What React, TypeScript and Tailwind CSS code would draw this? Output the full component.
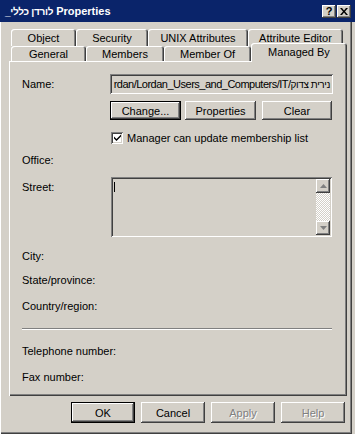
import React from "react";

const raised = "shadow-[inset_-1px_-1px_0_#404040,inset_1px_1px_0_#ffffff,inset_-2px_-2px_0_#808080]";
const sunken = "shadow-[inset_1px_1px_0_#808080,inset_-1px_-1px_0_#ffffff,inset_2px_2px_0_#404040,inset_-2px_-2px_0_#d4d0c8]";
const tabEdge = "shadow-[inset_1px_1px_0_#ffffff,inset_-1px_0_0_#404040,inset_-2px_0_0_#808080]";

function Tab({ label, w, front, selected }: { label: string; w: string; front?: boolean; selected?: boolean }) {
  if (selected) {
    return (
      <div className={`relative -top-[3px] z-10 h-[19px] ${w} bg-[#d4d0c8] rounded-t-[3px] pt-[2px] text-center shadow-[inset_1px_1px_0_#ffffff,inset_-1px_0_0_#404040,inset_-2px_0_0_#808080]`}>
        {label}
      </div>
    );
  }
  return (
    <div className={`h-full ${w} bg-[#d4d0c8] rounded-t-[3px] text-center ${front ? "pt-[1px]" : "pt-[2px]"} ${tabEdge}`}>
      {label}
    </div>
  );
}

function Btn({ label, w, def, disabled }: { label: string; w: string; def?: boolean; disabled?: boolean }) {
  return (
    <div className={`${w} h-full flex items-center justify-center ${def ? "border border-black" : ""} ${raised} ${disabled ? "text-[#808080] [text-shadow:1px_1px_0_#ffffff]" : "text-black"}`}>
      {label}
    </div>
  );
}

function Label({ text, mt }: { text: string; mt: string }) {
  return <div className={`${mt} h-[14px] leading-[14px]`}>{text}</div>;
}

export default function App() {
  return (
    <div className="w-[359px] h-[437px] bg-white font-['Liberation_Sans_Narrow','Liberation_Sans',Arial,sans-serif] text-[11px] leading-[14px] text-black">
      <div className="w-[355px] h-[434px] bg-[#d4d0c8] flex flex-col">
        {/* title bar */}
        <div className="h-[22px] bg-[#0a246a] flex items-center pl-[5px] pr-[4px] shrink-0">
          <div className="flex-1 text-white font-bold text-[11px] pt-[1px] whitespace-nowrap">
            <span className="text-[10px] tracking-[-0.3px]">_לורדן כללי</span> Properties
          </div>
          <div className={`w-[14px] h-[13px] bg-[#d4d0c8] ${raised} flex items-center justify-center font-bold text-[11px] leading-none`}>?</div>
          <div className={`w-[14px] h-[13px] ml-[1px] bg-[#d4d0c8] ${raised} flex items-center justify-center`}>
            <svg width="8" height="7" viewBox="0 0 8 7">
              <path d="M0 0h2l2 2.5L6 0h2L5 3.5 8 7H6L4 4.5 2 7H0l3-3.5z" fill="#000" />
            </svg>
          </div>
        </div>

        {/* body */}
        <div className="flex-1 w-[352px] pt-[7px] shadow-[inset_1px_0_0_#ffffff,inset_-1px_-1px_0_#404040,inset_-2px_-2px_0_#808080]">
          {/* back row of tabs */}
          <div className="ml-[11px] h-[17px] flex">
            <Tab label="Object" w="w-[65px]" />
            <Tab label="Security" w="w-[72px]" />
            <Tab label="UNIX Attributes" w="w-[100px]" />
            <Tab label="Attribute Editor" w="w-[95px]" />
          </div>
          {/* front row of tabs */}
          <div className="ml-[11px] h-[15px] flex">
            <Tab label="General" w="w-[75px]" front />
            <Tab label="Members" w="w-[78px]" front />
            <Tab label="Member Of" w="w-[87px]" front />
            <Tab label="Managed By" w="w-[96px]" selected />
          </div>

          {/* panel */}
          <div className="ml-[9px] w-[338px] h-[335px] pl-[13px] pt-[13px] shadow-[inset_1px_1px_0_#ffffff,inset_-1px_-1px_0_#404040,inset_-2px_-2px_0_#808080]">
            <div className="flex items-center h-[20px]">
              <div className="w-[88px]">Name:</div>
              <div className={`w-[223px] h-full ${sunken} flex items-center justify-end pl-[3px] pr-[3px] overflow-hidden whitespace-nowrap`}>
                <span className="tracking-[-0.5px]">
                  rdan/Lordan_Users_and_Computers/IT/<span className="text-[10px] tracking-[-0.4px]">נירית צדוק</span>
                </span>
              </div>
            </div>

            <div className="mt-[7px] h-[19px] flex pl-[88px] gap-[4px]">
              <Btn label="Change..." w="w-[71px]" def />
              <Btn label="Properties" w="w-[71px]" />
              <div className="ml-[2px] h-full">
                <Btn label="Clear" w="w-[70px]" />
              </div>
            </div>

            <div className="mt-[11px] h-[13px] flex items-center pl-[89px]">
              <div className={`w-[12px] h-[12px] bg-white ${sunken} flex items-center justify-center`}>
                <svg width="7" height="7" viewBox="0 0 7 7">
                  <path d="M0 2.5l2.5 2.5L7 0.5V2.5L2.5 7 0 4.5z" fill="#000" />
                </svg>
              </div>
              <div className="ml-[4px]">Manager can update membership list</div>
            </div>

            <Label text="Office:" mt="mt-[9px]" />

            <div className="mt-[10px] flex h-[60px]">
              <div className="w-[89px] pt-[3px]">Street:</div>
              <div className={`w-[221px] h-full ${sunken} flex p-[2px]`}>
                <div className="flex-1 pl-[1px] pt-[3px]">
                  <div className="w-[1px] h-[10px] bg-black" />
                </div>
                <div className="w-[14px] h-full flex flex-col">
                  <div className={`h-[14px] ${raised} flex items-center justify-center`}>
                    <svg width="7" height="4" viewBox="0 0 7 4"><path d="M3.5 0L7 4H0z" fill="#808080" /></svg>
                  </div>
                  <div className="flex-1 bg-[image:repeating-conic-gradient(#ffffff_0_25%,#d4d0c8_0_50%)] bg-[length:2px_2px]" />
                  <div className={`h-[14px] ${raised} flex items-center justify-center`}>
                    <svg width="7" height="4" viewBox="0 0 7 4"><path d="M0 0H7L3.5 4z" fill="#808080" /></svg>
                  </div>
                </div>
              </div>
            </div>

            <Label text="City:" mt="mt-[12px]" />
            <Label text="State/province:" mt="mt-[10px]" />
            <Label text="Country/region:" mt="mt-[12px]" />
            <div className="mt-[15px] w-[310px] h-[2px] border-t border-t-[#808080] border-b border-b-white" />
            <Label text="Telephone number:" mt="mt-[14px]" />
            <Label text="Fax number:" mt="mt-[12px]" />
          </div>

          {/* dialog buttons */}
          <div className="mt-[6px] ml-[71px] h-[21px] flex gap-[6px]">
            <Btn label="OK" w="w-[64px]" def />
            <Btn label="Cancel" w="w-[64px]" />
            <Btn label="Apply" w="w-[64px]" disabled />
            <Btn label="Help" w="w-[64px]" disabled />
          </div>
        </div>
      </div>
    </div>
  );
}
